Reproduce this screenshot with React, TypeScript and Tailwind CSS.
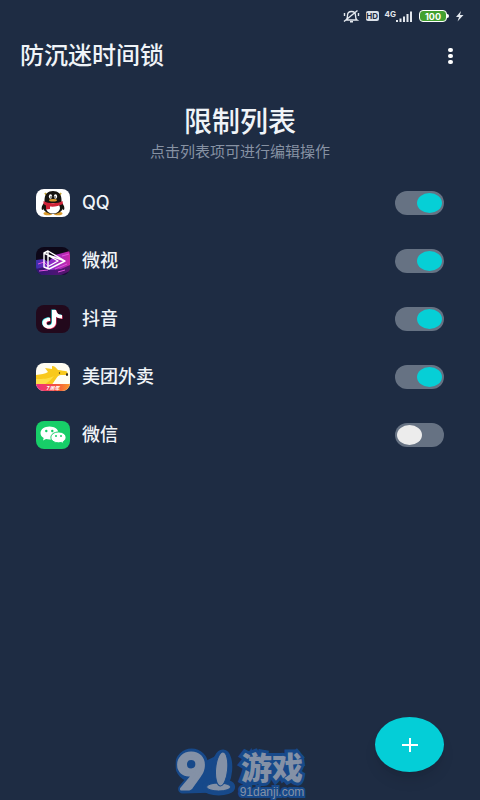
import React, { useState } from "react";

/* --- APP ICONS --- */

function QQIcon() {
  return (
    <svg viewBox="0 0 34 28" className="h-7 w-[34px] rounded-lg bg-white" aria-hidden="true">
      <path d="M9 4l3 4M25 4l-3 4" stroke="#c9a93a" strokeWidth="2" />
      <path d="M8 14c-2 2-3 5-2 7 1 0 2-2 3-3zM26 14c2 2 3 5 2 7-1 0-2-2-3-3z" fill="#16130f" />
      <ellipse cx="12" cy="24.500" rx="4.500" ry="1.800" fill="#d99a2b" />
      <ellipse cx="22" cy="24.500" rx="4.500" ry="1.800" fill="#d99a2b" />
      <ellipse cx="17" cy="18" rx="10" ry="7" fill="#16130f" />
      <ellipse cx="17" cy="19" rx="7" ry="5.500" fill="#fff" />
      <path d="M8.500 11c0-6 3.500-9 8.500-9s8.500 3 8.500 9v3h-17z" fill="#16130f" />
      <ellipse cx="14.500" cy="7.500" rx="1.600" ry="2.200" fill="#fff" />
      <ellipse cx="19.500" cy="7.500" rx="1.600" ry="2.200" fill="#fff" />
      <circle cx="15" cy="8" r=".8" fill="#16130f" />
      <circle cx="19" cy="8" r=".8" fill="#16130f" />
      <ellipse cx="17" cy="11.300" rx="4" ry="1.300" fill="#d99a2b" />
      <path d="M7.500 12c5 3 14 3 19 0l.5 3c-4 2-9 3-13 2.500V20l-4 .5V16.500L7.500 15z" fill="#cf2338" />
    </svg>
  );
}

function WeishiIcon() {
  return (
    <svg viewBox="0 0 34 28" className="h-7 w-[34px] rounded-lg bg-[#0d0718]" aria-hidden="true">
      <defs>
        <linearGradient id="weishi" x1="0" x2="1">
          <stop offset="0" stopColor="#3a2dac" />
          <stop offset=".45" stopColor="#8a2bc8" />
          <stop offset="1" stopColor="#c928a8" />
        </linearGradient>
      </defs>
      <path d="M0 13l8-1 4 3 7-7 15-4v20l-9 4H0z" fill="url(#weishi)" />
      <path d="M0 22l8-2 7 3 10-1 9-4v10H0z" fill="#2a0d52" opacity=".7" />
      <path d="M2 17l6-2 5 5M19 22l12-5M3 24l9-1M22 25l7-2M26 9l7-2" stroke="#e154e0" strokeWidth="1" fill="none" />
      <path d="M8 6l4-2 17 10-16 8-5-2z M12 4v17 M8 6l4 2 17 6 M13 9l9 5-9 5" fill="none" stroke="#fff" strokeWidth="1.400" strokeLinejoin="round" />
    </svg>
  );
}

function DouyinIcon() {
  const note = "M16 5h4c.4 3 2.600 5 6 5v3.500c-2.300 0-4.400-.6-6-1.700V17c0 4-3 6.500-7 6.500S6.500 21 6.500 18s3.300-5.500 7.500-5.200V16c-2-.3-3.600.5-3.600 2s1.100 2.300 2.800 2.300S16 19.300 16 17z";
  return (
    <svg viewBox="0 0 34 28" className="h-7 w-[34px] rounded-lg bg-[#22091c]" aria-hidden="true">
      <path d={note} fill="#35d9dc" transform="translate(-.6 -.5)" />
      <path d={note} fill="#e93462" transform="translate(.6 .5)" />
      <path d={note} fill="#fff" />
    </svg>
  );
}

function MeituanIcon() {
  return (
    <svg viewBox="0 0 34 28" className="h-7 w-[34px] rounded-lg bg-[#fffdf2]" aria-hidden="true">
      <defs>
        <linearGradient id="banner" x1="0" x2="1">
          <stop offset="0" stopColor="#ee2f82" />
          <stop offset=".6" stopColor="#f4513d" />
          <stop offset="1" stopColor="#fa9c28" />
        </linearGradient>
      </defs>
      <path d="M0 12c5-1 9-1 12-3l-3-4 7 1 0-3c3 0 4 2 6 4 3 .5 7 .8 9 1.500l1 3c-4 1-7 0-9 1-3 2-4 6-8 10H0z" fill="#f9c91d" />
      <path d="M0 16c7 0 12 0 18-3-3 4-6 6-10 9H0z" fill="#fddf48" />
      <circle cx="23.500" cy="10" r=".7" fill="#352b18" />
      <ellipse cx="31" cy="11.500" rx="1" ry="1.500" fill="#352b18" />
      <path d="M0 21h34v7H0z" fill="url(#banner)" />
      <text x="17" y="26.500" textAnchor="middle" fontSize="5" fontWeight="700" fontStyle="italic" fill="#fff">7周年</text>
    </svg>
  );
}

function WechatIcon() {
  return (
    <svg viewBox="0 0 34 28" className="h-7 w-[34px] rounded-lg bg-[#17ce68]" aria-hidden="true">
      <path d="M13.500 5.500C8.500 5.500 4.500 8.300 4.500 12c0 2.100 1.200 3.900 3.200 5.100L7 19.500l3-1.400c1.100.3 2.300.5 3.500.5 5 0 9-2.900 9-6.600s-4-6.500-9-6.500z" fill="#fff" />
      <path d="M22.500 11c-4.300 0-7.600 2.300-7.600 5.400s3.300 5.400 7.600 5.400c1 0 2-.1 2.900-.4l2.400 1.200-.5-2c1.600-1 2.700-2.500 2.700-4.200 0-3.100-3.300-5.400-7.500-5.400z" fill="#fff" stroke="#17ce68" strokeWidth="1" />
      <g fill="#17ce68">
        <circle cx="10.300" cy="10" r="1.200" />
        <circle cx="16.300" cy="10" r="1.200" />
        <circle cx="20" cy="15" r="1" />
        <circle cx="25" cy="15" r="1" />
      </g>
    </svg>
  );
}

/* --- STATUS BAR --- */

function StatusBar() {
  return (
    <div className="flex h-8 items-center justify-end gap-1.5 pr-4 text-[#e3e8ee]">
      <svg viewBox="0 0 18 14" className="h-3.5 w-[18px]" fill="none" stroke="currentColor" strokeWidth="1.400" aria-hidden="true">
        <path d="M4 11h11c-1.500-1-1.500-2.500-1.500-4.500C13.500 4 12 2.500 9.500 2.500S5.500 4 5.500 6.500 5.500 10 4 11zM8 12.700h3M15.500 1.500L2 12.500M2.500 4v3M16.500 4v3" />
      </svg>
      <span className="flex h-2.5 w-[13px] items-center justify-center rounded-xs bg-[#dbe1e9] text-[8px] font-bold leading-none text-[#1e2c43]">HD</span>
      <div className="flex items-end">
        <span className="self-start text-[8px] font-bold leading-none">4G</span>
        <svg viewBox="0 0 17 12" className="h-3 w-[17px]" fill="currentColor" aria-hidden="true">
          <path d="M0 10h2v2H0zM3.500 8.500h2V12h-2zM7 6.500h2V12H7zM10.500 4h2v8h-2zM14 1.500h2V12h-2z" />
        </svg>
      </div>
      <div className="flex items-center">
        <span className="flex h-3 w-7 items-center justify-center rounded-sm border border-white bg-[#43a02f] text-[9px] font-bold leading-none text-white">100</span>
        <span className="h-1 w-0.5 rounded-r-sm bg-white" />
      </div>
      <svg viewBox="0 0 9 12" className="h-3 w-[9px]" fill="currentColor" aria-hidden="true">
        <path d="M6 1L1 7h3l-1.500 4.500L8.500 5H5z" />
      </svg>
    </div>
  );
}

interface LimitedApp {
  id: string;
  name: string;
  icon: React.ReactNode;
  enabled: boolean;
}

const initialApps: LimitedApp[] = [
  { id: "qq", name: "QQ", icon: <QQIcon />, enabled: true },
  { id: "weishi", name: "微视", icon: <WeishiIcon />, enabled: true },
  { id: "douyin", name: "抖音", icon: <DouyinIcon />, enabled: true },
  { id: "meituan", name: "美团外卖", icon: <MeituanIcon />, enabled: true },
  { id: "wechat", name: "微信", icon: <WechatIcon />, enabled: false },
];

function Watermark() {
  return (
    <div className="pointer-events-none absolute bottom-0 left-1/2 flex -translate-x-1/2 items-end text-[#8491a6]">
      <svg viewBox="0 -10 64 64" className="size-16" aria-hidden="true">
        {/* Blue backing shared by both digits */}
        <g stroke="#17498a" strokeWidth="9" strokeLinejoin="round" fill="#17498a">
          <ellipse cx="16" cy="19" rx="12" ry="12" />
          <path d="M7 43l12-14 9-8 14-7v28z" />
          <ellipse cx="46" cy="24" rx="6" ry="16" transform="rotate(5 46 24)" />
          <ellipse cx="43" cy="41" rx="12" ry="4" />
        </g>
        <text x="1" y="43" fontSize="50" fontWeight="900" fontFamily="Lato, sans-serif" fill="currentColor" stroke="currentColor" strokeWidth="3" strokeLinejoin="round">9</text>
        <g fill="currentColor" stroke="#17498a" strokeWidth="1">
          <ellipse cx="43" cy="41" rx="12" ry="4" />
          <ellipse cx="46" cy="23" rx="6" ry="17" transform="rotate(5 46 23)" />
        </g>
      </svg>
      <div className="flex flex-col items-center">
        <span className="text-[31px] font-black leading-8 [paint-order:stroke_fill] [-webkit-text-stroke:6px_#17498a]">游戏</span>
        <span className="font-['Liberation_Sans',sans-serif] text-xs leading-4 [paint-order:stroke_fill] [-webkit-text-stroke:4px_#17498a]">91danji.com</span>
      </div>
    </div>
  );
}

export default function App() {
  const [apps, setApps] = useState(initialApps);

  const toggle = (id: string) =>
    setApps((prev) => prev.map((app) => (app.id === id ? { ...app, enabled: !app.enabled } : app)));

  return (
    <div className="relative min-h-screen overflow-hidden bg-[#1e2c43] font-[Inter,'Noto_Sans_CJK_SC',sans-serif] text-[#f0f4f8]">
      <StatusBar />

      <header className="flex h-12 items-center justify-between pl-5 pr-4">
        <h1 className="text-2xl font-medium">防沉迷时间锁</h1>
        <button aria-label="更多" className="flex h-8 w-7 flex-col items-center justify-center gap-0.5">
          <span className="h-1 w-[5px] rounded-full bg-white" />
          <span className="h-1 w-[5px] rounded-full bg-white" />
          <span className="h-1 w-[5px] rounded-full bg-white" />
        </button>
      </header>

      <main className="px-9 pt-6">
        <div className="text-center">
          <h2 className="text-[28px] font-medium leading-9">限制列表</h2>
          <p className="text-[15px] leading-6 text-[#8792a3]">点击列表项可进行编辑操作</p>
        </div>

        <ul className="pt-2.5">
          {apps.map((app) => (
            <li key={app.id}>
              <label htmlFor={app.id} className="flex h-[58px] cursor-pointer items-center">
                {app.icon}
                <span className="ml-3 flex-1 text-lg font-medium">{app.name}</span>
                <input
                  id={app.id}
                  type="checkbox"
                  role="switch"
                  checked={app.enabled}
                  onChange={() => toggle(app.id)}
                  className="flex h-6 w-[49px] cursor-pointer appearance-none items-center rounded-full bg-[#667283] px-0.5 before:h-5 before:w-[25px] before:rounded-[50%] before:bg-[#ececec] checked:justify-end checked:before:bg-[#06cfd6]"
                />
              </label>
            </li>
          ))}
        </ul>
      </main>

      <Watermark />

      {/* Floating add button */}
      <button
        aria-label="添加"
        className="absolute bottom-7 right-9 flex h-[55px] w-[69px] items-center justify-center rounded-[50%] bg-[#04ced7] shadow-lg"
      >
        <svg viewBox="0 0 16 14" className="h-3.5 w-4" stroke="white" strokeWidth="2" aria-hidden="true">
          <path d="M0 7h16M8 0v14" />
        </svg>
      </button>
    </div>
  );
}
